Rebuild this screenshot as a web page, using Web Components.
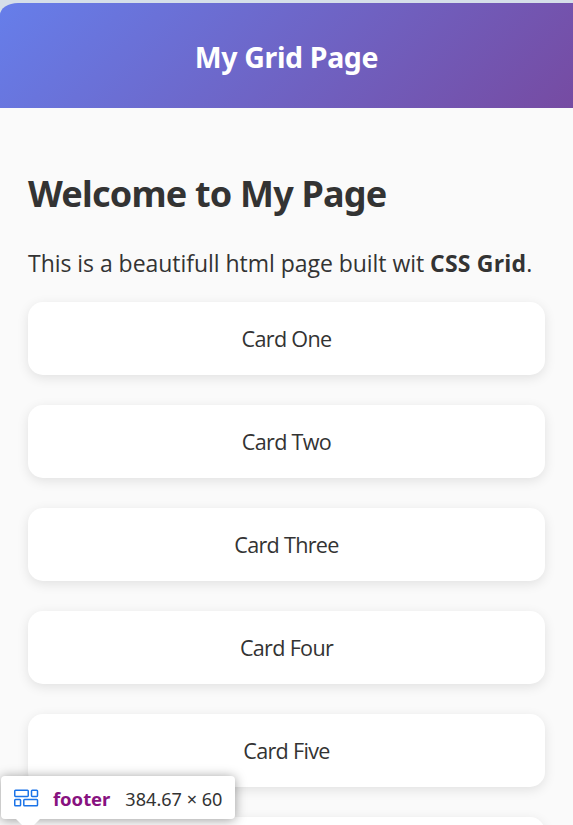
<!DOCTYPE html>
<html lang="en"><head><meta charset="utf-8"><title>My Grid Page</title>
<style>html,body{margin:0;height:100%;overflow:hidden;background:#d5dfe9}</style></head>
<body><grid-page></grid-page>
<script>
const define=(name,html)=>customElements.define(name,class extends HTMLElement{
  constructor(){super();this.attachShadow({mode:'open'}).innerHTML=html;}
});
define('page-header',`<style>
:host{display:flex;align-items:center;justify-content:center;height:105px;box-sizing:border-box;padding-top:2px;background:linear-gradient(135deg,#667eea 0%,#764ba2 100%);color:#fff;font-size:28.5px;font-weight:700;letter-spacing:-.36px;border-top-left-radius:18px 12px}
</style><slot></slot>`);
define('grid-card',`<style>
:host{display:flex;align-items:center;justify-content:center;height:73px;box-sizing:border-box;padding-bottom:1px;background:#fff;border-radius:15px;box-shadow:0 3px 12px rgba(0,0,0,.1);font-family:"Open Sans","Noto Sans",sans-serif;font-size:21.6px;letter-spacing:-.7px;color:#333}
</style><slot></slot>`);
define('inspect-tip',`<style>
:host{position:absolute;left:1px;top:776px;width:234px;height:43px;display:flex;align-items:center;background:#fff;border-radius:4px;box-shadow:0 1px 12px rgba(0,0,0,.4);font-size:18px;color:#333;box-sizing:border-box;padding-left:12px;white-space:nowrap}
svg{margin-right:14px}b{color:#881280;margin-right:15px;font-size:18.5px;letter-spacing:-.05px;position:relative;top:1px}
span{position:relative;top:1px;font-size:18.1px}
i{position:absolute;left:15px;top:43px;border:12px solid transparent;border-top-color:#fff}
</style><svg width="26" height="18" viewBox="0 0 26 18" fill="none" stroke="#1a73e8" stroke-width="1.5"><rect x="1.75" y="1.2" width="13.5" height="6.2" rx=".8"/><rect x="18.5" y="1.2" width="6" height="6.2" rx=".8"/><rect x="1.75" y="10.5" width="5.8" height="6.2" rx=".8"/><rect x="10.8" y="10.5" width="13.7" height="6.2" rx=".8"/></svg><b>footer</b><span>384.67 × 60</span><i></i>`);
define('grid-page',`<style>
:host{display:block;height:825px;overflow:hidden;position:relative;box-sizing:border-box;padding-top:3px;font-family:"Noto Sans","Open Sans",sans-serif;color:#333}
main{background:#fafafa;padding:59px 28px 0;height:800px;box-sizing:border-box}
h1{font-size:36px;line-height:54px;margin:0;letter-spacing:-.8px}p{font-family:"Open Sans","Noto Sans",sans-serif;font-size:23px;line-height:34px;margin:25px 0 22px;white-space:nowrap;letter-spacing:-.04px}p b{letter-spacing:.2px}
section{display:grid;gap:30px}
</style><page-header>My Grid Page</page-header><main><h1>Welcome to My Page</h1><p>This is a beautifull html page built wit <b>CSS Grid</b>.</p><section><grid-card>Card One</grid-card><grid-card>Card Two</grid-card><grid-card>Card Three</grid-card><grid-card>Card Four</grid-card><grid-card>Card Five</grid-card><grid-card></grid-card></section></main><inspect-tip></inspect-tip>`);
</script></body></html>
